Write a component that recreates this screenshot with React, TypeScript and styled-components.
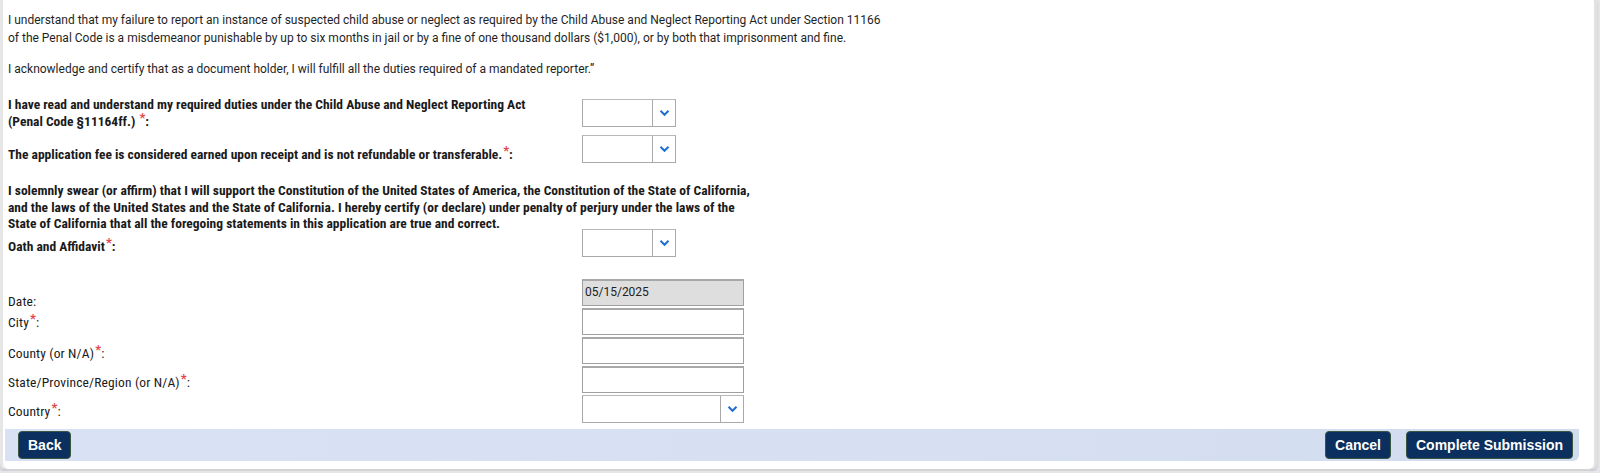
import React from "react";
import styled, { createGlobalStyle } from "styled-components";

const Global = createGlobalStyle`
  html, body { margin: 0; padding: 0; background: #e4e6ea; overflow: hidden; width: 100%; }
  body { font-family: Roboto, "Noto Sans", sans-serif; color: #1a1a1a; }
  * { box-sizing: border-box; }
`;

const Card = styled.div`
  width: calc(100vw - 3px);
  background: #fff;
  border-left: 3px solid #e6e6e6;
  border-right: 3px solid #e2e2e2;
  border-bottom: 2px solid #d4d4d4;
  border-bottom-left-radius: 8px;
  border-bottom-right-radius: 8px;
  box-shadow: 0 2px 3px rgba(0, 0, 0, 0.15);
  padding-bottom: 8px;
`;

const Body = styled.div`
  padding: 11px 0 0 5px;
`;

const Para = styled.p<{ $top?: number }>`
  margin: ${(p) => p.$top ?? 0}px 0 0 0;
  font-size: 12px;
  line-height: 18px;
  color: #1f1f1f;
`;

const Row = styled.div<{ $top: number; $align?: string }>`
  display: grid;
  grid-template-columns: 574px auto;
  align-items: ${(p) => p.$align ?? "start"};
  margin-top: ${(p) => p.$top}px;
`;

const Label = styled.div<{ $bold?: boolean; $pt?: number; $lh?: number; $mb?: number }>`
  font-family: "Roboto Condensed", "Liberation Sans Narrow", Roboto, sans-serif;
  font-size: 13.5px;
  font-weight: ${(p) => (p.$bold ? 700 : 400)};
  line-height: ${(p) => p.$lh ?? 17}px;
  letter-spacing: ${(p) => (p.$bold ? 0 : 0.15)}px;
  padding-top: ${(p) => p.$pt ?? 0}px;
  margin-bottom: ${(p) => p.$mb ?? 0}px;
  white-space: nowrap;
  color: #1a1a1a;
`;

const Oath = styled(Label)`
  margin-top: 19px;
`;

const Star = styled.span`
  color: #e0474c;
  font-size: 13px;
  position: relative;
  top: -4px;
  margin-left: 1px;
  font-weight: 700;
  font-family: Roboto, sans-serif;
`;

const SelectBox = styled.div<{ $w: number; $mt?: number }>`
  width: ${(p) => p.$w}px;
  height: 28px;
  margin-top: ${(p) => p.$mt ?? 0}px;
  border: 1px solid #a9a9a9;
  border-top-color: #b8b8b8;
  background: #fff;
  display: flex;
  justify-content: flex-end;
`;

const Arrow = styled.div`
  width: 23px;
  border-left: 1px solid #a9a9a9;
  display: flex;
  align-items: center;
  justify-content: center;
`;

const TextBox = styled.div<{ $disabled?: boolean }>`
  width: 162px;
  height: 27px;
  border: 1px solid #a0a0a0;
  border-top: 2px solid #a8a8a8;
  background: ${(p) => (p.$disabled ? "#dedede" : "#fff")};
  font-size: 12px;
  line-height: 23px;
  padding-left: 2px;
  color: #222;
  font-family: Roboto, sans-serif;
`;

const Footer = styled.div`
  height: 32px;
  margin: 6px 15px 0 2px;
  background: linear-gradient(90deg, #d8e2f4 0%, #d6e0f2 60%, #d2dcef 100%);
  border-radius: 0 0 6px 0;
  display: flex;
  align-items: center;
  padding: 0 6px 0 13px;
  gap: 15px;
`;

const Button = styled.button`
  height: 28px;
  padding: 0 9px;
  background: #0b2f5e;
  color: #fff;
  border: 1px solid #3b5640;
  border-radius: 4px;
  font-family: "Liberation Sans", Arial, sans-serif;
  font-weight: 700;
  font-size: 14px;
  cursor: pointer;
`;

const Spacer = styled.div`
  flex: 1;
`;

const Chevron = () => (
  <svg width="11" height="8" viewBox="0 0 11 8">
    <path d="M1.5 1.8 L5.5 5.8 L9.5 1.8" fill="none" stroke="#1f6fd1" strokeWidth="2" />
  </svg>
);

const Select = ({ w, mt }: { w: number; mt?: number }) => (
  <SelectBox $w={w} $mt={mt}>
    <Arrow>
      <Chevron />
    </Arrow>
  </SelectBox>
);

const Req = () => <Star>*</Star>;

export default function App() {
  return (
    <>
      <Global />
      <Card>
        <Body>
          <Para>
            I understand that my failure to report an instance of suspected child abuse or neglect as required by the Child Abuse and Neglect Reporting Act under Section 11166
            <br />
            of the Penal Code is a misdemeanor punishable by up to six months in jail or by a fine of one thousand dollars ($1,000), or by both that imprisonment and fine.
          </Para>
          <Para $top={13}>
            I acknowledge and certify that as a document holder, I will fulfill all the duties required of a mandated reporter.”
          </Para>

          <Row $top={18}>
            <Label $bold>
              I have read and understand my required duties under the Child Abuse and Neglect Reporting Act
              <br />
              (Penal Code §11164ff.) <Req />:
            </Label>
            <Select w={94} mt={3} />
          </Row>

          <Row $top={1}>
            <Label $bold $pt={15}>
              The application fee is considered earned upon receipt and is not refundable or transferable.<Req />:
            </Label>
            <Select w={94} mt={4} />
          </Row>

          <Oath as="div" $bold $lh={16.5}>
            I solemnly swear (or affirm) that I will support the Constitution of the United States of America, the Constitution of the State of California,
            <br />
            and the laws of the United States and the State of California. I hereby certify (or declare) under penalty of perjury under the laws of the
            <br />
            State of California that all the foregoing statements in this application are true and correct.
          </Oath>

          <Row $top={-3} $align="center">
            <Label $bold $pt={7}>
              Oath and Affidavit<Req />:
            </Label>
            <Select w={94} />
          </Row>

          <Row $top={22} $align="end">
            <Label $mb={-4}>Date:</Label>
            <TextBox $disabled>05/15/2025</TextBox>
          </Row>
          <Row $top={2} $align="start">
            <Label $pt={6}>
              City<Req />:
            </Label>
            <TextBox />
          </Row>
          <Row $top={2} $align="center">
            <Label $pt={6}>
              County (or N/A)<Req />:
            </Label>
            <TextBox />
          </Row>
          <Row $top={2} $align="center">
            <Label $pt={6}>
              State/Province/Region (or N/A)<Req />:
            </Label>
            <TextBox />
          </Row>
          <Row $top={2} $align="center">
            <Label $pt={6}>
              Country<Req />:
            </Label>
            <Select w={162} />
          </Row>
        </Body>
        <Footer>
          <Button>Back</Button>
          <Spacer />
          <Button>Cancel</Button>
          <Button>Complete Submission</Button>
        </Footer>
      </Card>
    </>
  );
}
